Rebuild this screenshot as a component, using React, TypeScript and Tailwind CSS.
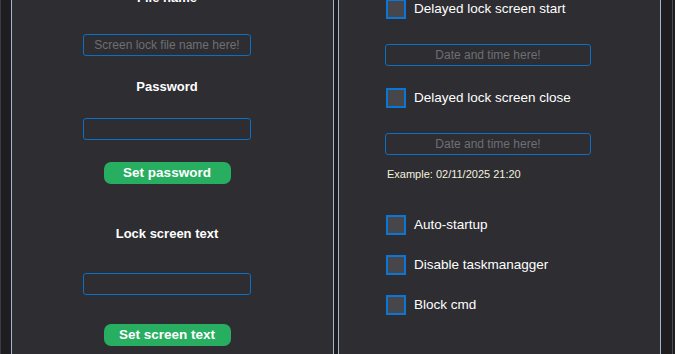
import React from "react";

const font = "font-['Liberation_Sans',Arial,sans-serif]";

function TextBox({ placeholder, width, className }: { placeholder?: string; width: string; className?: string }) {
  return (
    <input
      readOnly
      placeholder={placeholder}
      className={`block ${width} h-[22px] shrink-0 rounded-[3px] border border-[#0b6fc4] bg-[#2d2d32] px-2 text-center text-[12px] text-white outline-none placeholder:text-[#6f6f72] ${font} ${className ?? ""}`}
    />
  );
}

function CheckRow({ label, className }: { label: string; className?: string }) {
  return (
    <div className={`flex h-[20px] items-center gap-[8px] ${className ?? ""}`}>
      <div className="h-[20px] w-[20px] shrink-0 border-2 border-[#0a76d6] bg-[#47474b]" />
      <span className={`text-[13.5px] leading-none text-white ${font}`}>{label}</span>
    </div>
  );
}

function GreenButton({ label, className }: { label: string; className?: string }) {
  return (
    <button
      className={`block h-[22px] w-[127px] shrink-0 rounded-[7px] bg-[#27ae60] text-[13.5px] font-bold leading-none text-white ${font} ${className ?? ""}`}
    >
      {label}
    </button>
  );
}

export default function App() {
  return (
    <div className="flex h-[354px] w-[675px] overflow-hidden bg-[#1e1e21]">
      <div className="w-px bg-[#3b3b3f]" />
      <div className="w-[10px]" />

      {/* Left panel */}
      <div className="h-full w-[323px] shrink-0 overflow-hidden border-x border-[#a3b5cf] bg-[#2d2d32]">
        <div className="ml-[71px] flex w-[168px] flex-col items-center">
          <div className={`-mt-[10px] h-[16px] text-[13px] font-bold leading-[16px] text-white ${font}`}>File name</div>
          <TextBox placeholder="Screen lock file name here!" width="w-[168px]" className="mt-[28px]" />
          <div className={`mt-[23px] h-[16px] text-[13px] font-bold leading-[16px] text-white ${font}`}>Password</div>
          <TextBox width="w-[168px]" className="mt-[23px]" />
          <GreenButton label="Set password" className="mt-[22px]" />
          <div className={`mt-[42px] h-[16px] text-[13px] font-bold leading-[16px] text-white ${font}`}>Lock screen text</div>
          <TextBox width="w-[168px]" className="mt-[31px]" />
          <GreenButton label="Set screen text" className="mt-[29px]" />
        </div>
      </div>

      <div className="w-[4px]" />

      {/* Right panel */}
      <div className="h-full w-[323px] shrink-0 overflow-hidden border-x border-[#a3b5cf] bg-[#2d2d32]">
        <div className="ml-[46px] flex flex-col items-start">
          <CheckRow label="Delayed lock screen start" className="-mt-px ml-px" />
          <TextBox placeholder="Date and time here!" width="w-[206px]" className="mt-[25px]" />
          <CheckRow label="Delayed lock screen close" className="mt-[22px] ml-px" />
          <TextBox placeholder="Date and time here!" width="w-[206px]" className="mt-[25px]" />
          <div className={`mt-[12px] ml-[2px] h-[14px] text-[11px] leading-[14px] text-[#f4f1de] ${font}`}>
            Example: 02/11/2025 21:20
          </div>
          <CheckRow label="Auto-startup" className="mt-[34px] ml-px" />
          <CheckRow label="Disable taskmanagger" className="mt-[20px] ml-px" />
          <CheckRow label="Block cmd" className="mt-[20px] ml-px" />
        </div>
      </div>

      <div className="w-[11px]" />
      <div className="w-px bg-[#4a4a4f]" />
    </div>
  );
}
